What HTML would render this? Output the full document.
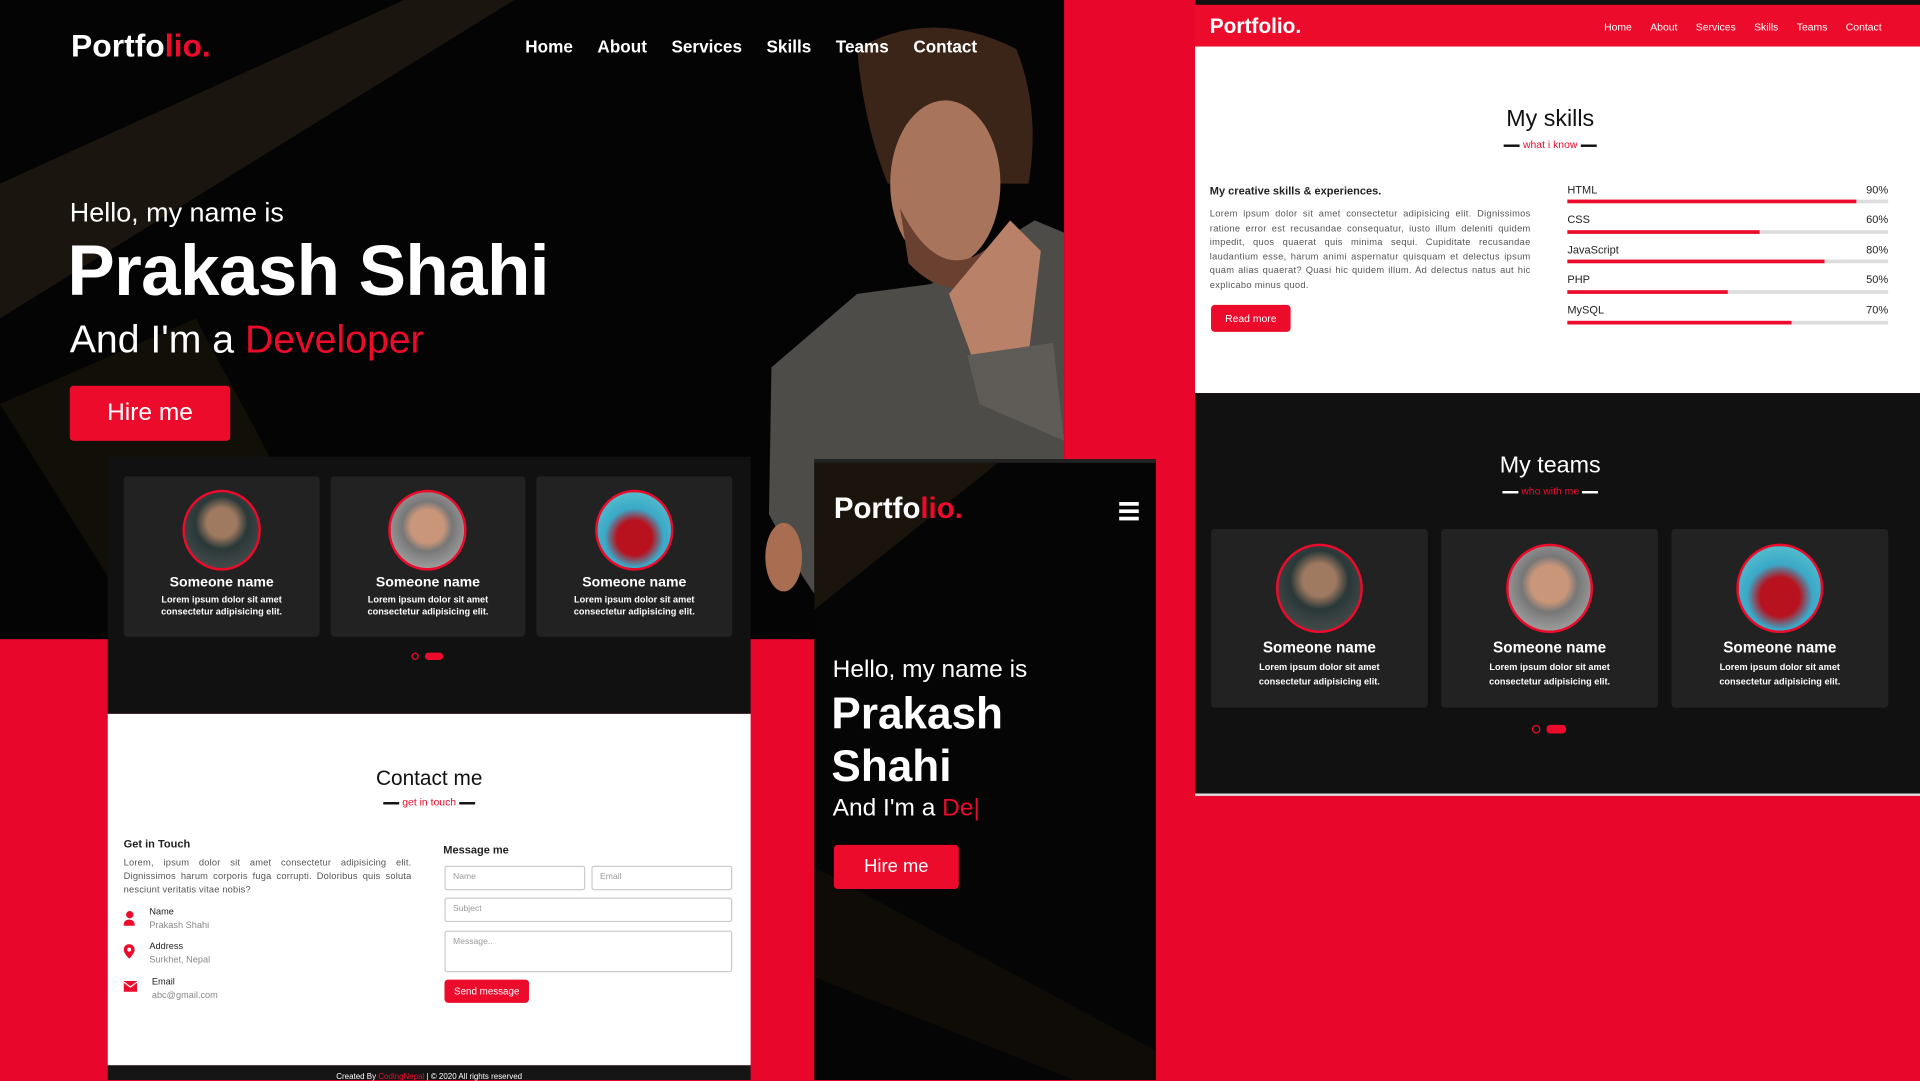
<!DOCTYPE html>
<html><head><meta charset="utf-8"><style>
*{margin:0;padding:0;box-sizing:border-box}
html,body{width:1920px;height:1080px;overflow:hidden;background:#e8062a;font-family:"Liberation Sans",sans-serif}
#s{position:absolute;left:0;top:0;width:1568px;height:882px;transform:scale(1.22449);transform-origin:0 0;background:#e8062a}
.a{position:absolute}
.w{color:#fff}.r{color:#ec0b2b}
.b{font-weight:bold}
.card{position:absolute;background:#222;border-radius:3px;text-align:center;color:#fff}
.av{position:absolute;border-radius:50%;border:2px solid #ec0b2b}
.btn{position:absolute;background:#ec0b2b;color:#fff;border-radius:3px;text-align:center}
.inp{position:absolute;border:1px solid #ccc;border-radius:2px;font-size:7px;color:#999;padding:5px 6px}
.bar{position:absolute;left:1280px;width:262px;height:3px;background:#ddd}
.bar i{display:block;height:3px;background:#ec0b2b}
.lbl{position:absolute;font-size:9px;color:#222}
</style></head><body><div id="s">

<!-- desktop hero -->
<div class="a" style="left:0;top:0;width:869px;height:522px;background:#040404;overflow:hidden">
<svg class="a" style="left:0;top:0" width="869" height="522"><polygon points="0,150 330,0 420,0 0,260" fill="#1a150e"/><polygon points="0,330 160,260 300,522 120,522" fill="#120e08"/>
<polygon points="630,300 700,240 760,232 845,180 869,190 869,522 690,522 655,470 628,420" fill="#4e4c49"/>
<path d="M700,40 Q760,5 830,40 Q850,90 840,150 L725,150 Q705,100 700,40Z" fill="#3b2518"/>
<ellipse cx="772" cy="150" rx="45" ry="68" fill="#a9745c"/>
<path d="M735,170 Q770,240 815,195 L812,225 Q775,250 742,215Z" fill="#6a4030"/>
<path d="M775,240 L825,180 L850,205 L840,290 L795,295Z" fill="#b98268"/>
<polygon points="790,290 860,280 869,360 800,330" fill="#5f5c58"/>
<ellipse cx="640" cy="455" rx="15" ry="28" fill="#a96e52"/>
</svg>
<div class="a w b" style="left:58px;top:22px;font-size:26px">Portfo<span class="r">lio.</span></div>
<div class="a w b" style="left:429px;top:30px;font-size:14px">Home<span style="margin-left:20px">About</span><span style="margin-left:20px">Services</span><span style="margin-left:20px">Skills</span><span style="margin-left:20px">Teams</span><span style="margin-left:20px">Contact</span></div>
<div class="a w" style="left:57px;top:161px;font-size:22px">Hello, my name is</div>
<div class="a w b" style="left:55px;top:188px;font-size:58px;letter-spacing:-0.5px">Prakash Shahi</div>
<div class="a w" style="left:57px;top:259px;font-size:32px">And I'm a <span class="r">Developer</span></div>
<div class="btn" style="left:57px;top:315px;width:131px;height:45px;line-height:45px;font-size:20px">Hire me</div>
</div>

<!-- team panel left -->
<div class="a" style="left:88px;top:373px;width:525px;height:210px;background:#111"></div>
<div class="card" style="left:101px;top:389px;width:160px;height:131px"></div>
<div class="card" style="left:270px;top:389px;width:159px;height:131px"></div>
<div class="card" style="left:438px;top:389px;width:160px;height:131px"></div>
<div class="av" style="left:149px;top:400px;width:64px;height:66px;background:radial-gradient(circle at 50% 40%,#a07a60 0 25%,#2a3838 45%,#555 100%)"></div>
<div class="av" style="left:317px;top:400px;width:64px;height:66px;background:radial-gradient(circle at 50% 45%,#c9967a 0 30%,#777 45%,#bbb 100%)"></div>
<div class="av" style="left:486px;top:400px;width:64px;height:66px;background:radial-gradient(circle at 50% 60%,#b8121e 0 30%,#3aa8c8 50%,#6cc 100%)"></div>
<div class="a w b" style="left:101px;top:470px;width:160px;text-align:center;font-size:11.5px">Someone name<div style="font-size:7.5px;line-height:10px;margin-top:3px">Lorem ipsum dolor sit amet<br>consectetur adipisicing elit.</div></div>
<div class="a w b" style="left:270px;top:470px;width:159px;text-align:center;font-size:11.5px">Someone name<div style="font-size:7.5px;line-height:10px;margin-top:3px">Lorem ipsum dolor sit amet<br>consectetur adipisicing elit.</div></div>
<div class="a w b" style="left:438px;top:470px;width:160px;text-align:center;font-size:11.5px">Someone name<div style="font-size:7.5px;line-height:10px;margin-top:3px">Lorem ipsum dolor sit amet<br>consectetur adipisicing elit.</div></div>
<div class="a" style="left:336px;top:533px;width:6px;height:6px;border:1px solid #ec0b2b;border-radius:50%"></div>
<div class="a" style="left:347px;top:533px;width:15px;height:6px;background:#ec0b2b;border-radius:3px"></div>

<!-- contact -->
<div class="a" style="left:88px;top:583px;width:525px;height:287px;background:#fff"></div>
<div class="a" style="left:88px;top:626px;width:525px;text-align:center;font-size:17px;color:#111">Contact me</div>
<div class="a" style="left:88px;top:650px;width:525px;text-align:center;font-size:8.5px" ><span style="display:inline-block;width:13px;height:2px;background:#111;vertical-align:middle"></span> <span class="r">get in touch</span> <span style="display:inline-block;width:13px;height:2px;background:#111;vertical-align:middle"></span></div>
<div class="a b" style="left:101px;top:684px;font-size:9px;color:#222">Get in Touch</div>
<div class="a" style="left:101px;top:700px;width:235px;font-size:7.6px;line-height:10.8px;color:#555;text-align:justify;letter-spacing:0.15px">Lorem, ipsum dolor sit amet consectetur adipisicing elit. Dignissimos harum corporis fuga corrupti. Doloribus quis soluta nesciunt veritatis vitae nobis?</div>
<div class="a" style="left:101px;top:744px;width:9px;height:12px"><div style="width:6px;height:6px;border-radius:50%;background:#ec0b2b;margin-left:1.5px"></div><div style="width:9px;height:5px;background:#ec0b2b;border-radius:4px 4px 0 0;margin-top:1px"></div></div>
<div class="a" style="left:122px;top:740px;font-size:7.5px;color:#222">Name<div style="color:#888;margin-top:2px">Prakash Shahi</div></div>
<svg class="a" style="left:101px;top:771px" width="9" height="12"><path d="M4.5,0a4.5,4.5 0 0 1 4.5,4.5c0,3-4.5,7.5-4.5,7.5S0,7.5,0,4.5A4.5,4.5 0 0 1 4.5,0z" fill="#ec0b2b"/><circle cx="4.5" cy="4.5" r="1.6" fill="#fff"/></svg>
<div class="a" style="left:122px;top:768px;font-size:7.5px;color:#222">Address<div style="color:#888;margin-top:2px">Surkhet, Nepal</div></div>
<svg class="a" style="left:101px;top:801px" width="11" height="9"><rect width="11" height="9" fill="#ec0b2b"/><path d="M0,1 5.5,5 11,1" stroke="#fff" fill="none"/></svg>
<div class="a" style="left:124px;top:797px;font-size:7.5px;color:#222">Email<div style="color:#888;margin-top:2px">abc@gmail.com</div></div>
<div class="a b" style="left:362px;top:689px;font-size:9px;color:#222">Message me</div>
<div class="inp" style="left:363px;top:707px;width:115px;height:20px">Name</div>
<div class="inp" style="left:483px;top:707px;width:115px;height:20px">Email</div>
<div class="inp" style="left:363px;top:733px;width:235px;height:20px">Subject</div>
<div class="inp" style="left:363px;top:760px;width:235px;height:34px">Message..</div>
<div class="btn" style="left:363px;top:800px;width:69px;height:19px;line-height:19px;font-size:8px">Send message</div>
<div class="a" style="left:88px;top:870px;width:525px;height:12px;background:#151515;color:#fff;font-size:6.5px;text-align:center;padding-top:6px">Created By <span class="r">CodingNepal</span> | © 2020 All rights reserved</div>

<!-- mobile -->
<div class="a" style="left:665px;top:375px;width:279px;height:507px;background:#050505;border-top:3px solid #222;overflow:hidden">
<svg class="a" style="left:0;top:0" width="279" height="507"><polygon points="0,0 150,0 0,120" fill="#1a140d"/><polygon points="0,330 0,420 220,507 279,507 279,480" fill="#0f0c08"/></svg>
<div class="a w b" style="left:16px;top:24px;font-size:24px">Portfo<span class="r">lio.</span></div>
<div class="a" style="left:249px;top:32px;width:16px"><div style="height:3px;background:#fff;margin-bottom:3px"></div><div style="height:3px;background:#fff;margin-bottom:3px"></div><div style="height:3px;background:#fff"></div></div>
<div class="a w" style="left:15px;top:158px;font-size:20px">Hello, my name is</div>
<div class="a w b" style="left:14px;top:183px;font-size:36px;line-height:43px">Prakash<br>Shahi</div>
<div class="a w" style="left:15px;top:271px;font-size:20px">And I'm a <span class="r">De|</span></div>
<div class="btn" style="left:16px;top:312px;width:102px;height:36px;line-height:36px;font-size:15px">Hire me</div>
</div>

<!-- right panel -->
<div class="a" style="left:976px;top:0;width:592px;height:4px;background:#111"></div>
<div class="a" style="left:976px;top:4px;width:592px;height:34px;background:#ec0b2b"></div>
<div class="a w b" style="left:988px;top:12px;font-size:17px">Portfolio.</div>
<div class="a w" style="left:1310px;top:17px;font-size:8.5px">Home<span style="margin-left:15px">About</span><span style="margin-left:15px">Services</span><span style="margin-left:15px">Skills</span><span style="margin-left:15px">Teams</span><span style="margin-left:15px">Contact</span></div>
<div class="a" style="left:976px;top:38px;width:592px;height:283px;background:#fff"></div>
<div class="a" style="left:976px;top:87px;width:580px;text-align:center;font-size:19px;color:#111">My skills</div>
<div class="a" style="left:976px;top:113px;width:580px;text-align:center;font-size:8.5px"><span style="display:inline-block;width:13px;height:2px;background:#111;vertical-align:middle"></span> <span class="r">what i know</span> <span style="display:inline-block;width:13px;height:2px;background:#111;vertical-align:middle"></span></div>
<div class="a b" style="left:988px;top:151px;font-size:9px;color:#222">My creative skills &amp; experiences.</div>
<div class="a" style="left:988px;top:169px;width:262px;font-size:7.6px;line-height:11.6px;color:#555;text-align:justify;letter-spacing:0.25px">Lorem ipsum dolor sit amet consectetur adipisicing elit. Dignissimos ratione error est recusandae consequatur, iusto illum deleniti quidem impedit, quos quaerat quis minima sequi. Cupiditate recusandae laudantium esse, harum animi aspernatur quisquam et delectus ipsum quam alias quaerat? Quasi hic quidem illum. Ad delectus natus aut hic explicabo minus quod.</div>
<div class="btn" style="left:989px;top:249px;width:65px;height:22px;line-height:22px;font-size:8.5px">Read more</div>
<div class="lbl" style="left:1280px;top:150px">HTML</div><div class="lbl" style="left:1524px;top:150px">90%</div><div class="bar" style="top:163px"><i style="width:90%"></i></div>
<div class="lbl" style="left:1280px;top:174px">CSS</div><div class="lbl" style="left:1524px;top:174px">60%</div><div class="bar" style="top:188px"><i style="width:60%"></i></div>
<div class="lbl" style="left:1280px;top:199px">JavaScript</div><div class="lbl" style="left:1524px;top:199px">80%</div><div class="bar" style="top:212px"><i style="width:80%"></i></div>
<div class="lbl" style="left:1280px;top:223px">PHP</div><div class="lbl" style="left:1524px;top:223px">50%</div><div class="bar" style="top:237px"><i style="width:50%"></i></div>
<div class="lbl" style="left:1280px;top:248px">MySQL</div><div class="lbl" style="left:1524px;top:248px">70%</div><div class="bar" style="top:262px"><i style="width:70%"></i></div>

<div class="a" style="left:976px;top:321px;width:592px;height:327px;background:#111"></div>
<div class="a" style="left:976px;top:648px;width:592px;height:2px;background:#ddd"></div>
<div class="a w" style="left:976px;top:370px;width:580px;text-align:center;font-size:19px">My teams</div>
<div class="a" style="left:976px;top:396px;width:580px;text-align:center;font-size:8.5px"><span style="display:inline-block;width:13px;height:2px;background:#fff;vertical-align:middle"></span> <span class="r">who with me</span> <span style="display:inline-block;width:13px;height:2px;background:#fff;vertical-align:middle"></span></div>
<div class="card" style="left:989px;top:432px;width:177px;height:146px"></div>
<div class="card" style="left:1177px;top:432px;width:177px;height:146px"></div>
<div class="card" style="left:1365px;top:432px;width:177px;height:146px"></div>
<div class="av" style="left:1042px;top:444px;width:71px;height:73px;background:radial-gradient(circle at 50% 40%,#a07a60 0 25%,#2a3838 45%,#555 100%)"></div>
<div class="av" style="left:1230px;top:444px;width:71px;height:73px;background:radial-gradient(circle at 50% 45%,#c9967a 0 30%,#777 45%,#bbb 100%)"></div>
<div class="av" style="left:1418px;top:444px;width:71px;height:73px;background:radial-gradient(circle at 50% 60%,#b8121e 0 30%,#3aa8c8 50%,#6cc 100%)"></div>
<div class="a w b" style="left:989px;top:522px;width:177px;text-align:center;font-size:12.5px">Someone name<div style="font-size:7.5px;line-height:12px;margin-top:3px">Lorem ipsum dolor sit amet<br>consectetur adipisicing elit.</div></div>
<div class="a w b" style="left:1177px;top:522px;width:177px;text-align:center;font-size:12.5px">Someone name<div style="font-size:7.5px;line-height:12px;margin-top:3px">Lorem ipsum dolor sit amet<br>consectetur adipisicing elit.</div></div>
<div class="a w b" style="left:1365px;top:522px;width:177px;text-align:center;font-size:12.5px">Someone name<div style="font-size:7.5px;line-height:12px;margin-top:3px">Lorem ipsum dolor sit amet<br>consectetur adipisicing elit.</div></div>
<div class="a" style="left:1251px;top:592px;width:7px;height:7px;border:1px solid #ec0b2b;border-radius:50%"></div>
<div class="a" style="left:1263px;top:592px;width:16px;height:7px;background:#ec0b2b;border-radius:3px"></div>

</div></body></html>
